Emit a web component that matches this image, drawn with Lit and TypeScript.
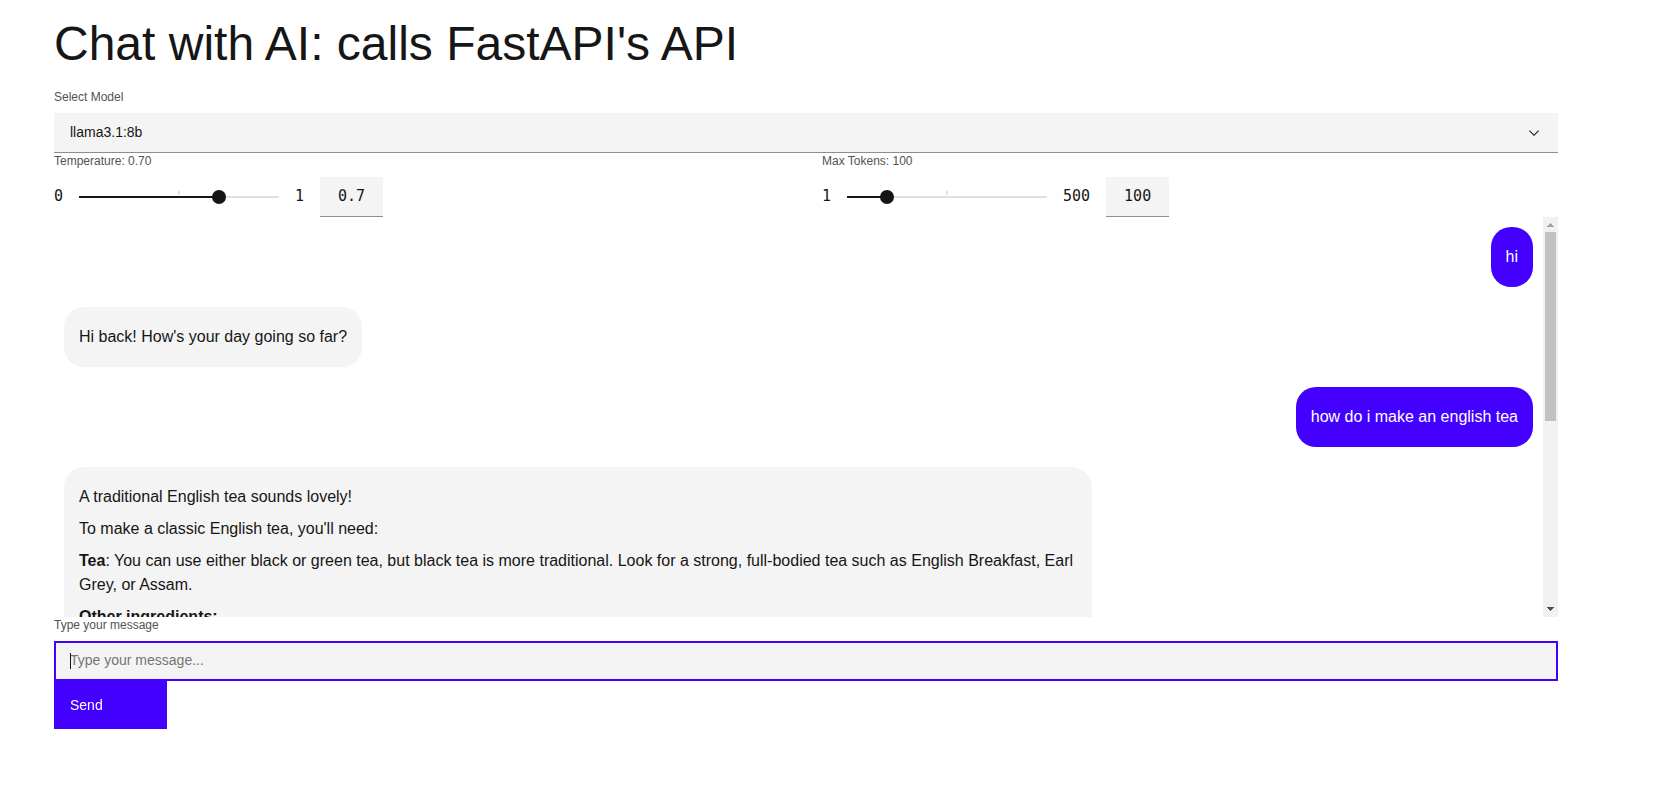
import { LitElement, html, css } from "lit";
import { customElement, property, state, query } from "lit/decorators.js";
import { classMap } from "lit/directives/class-map.js";
import { styleMap } from "lit/directives/style-map.js";

interface Message {
  role: "user" | "assistant";
  paragraphs: { lead?: string; text: string }[];
}

const initialMessages: Message[] = [
  { role: "user", paragraphs: [{ text: "hi" }] },
  { role: "assistant", paragraphs: [{ text: "Hi back! How's your day going so far?" }] },
  { role: "user", paragraphs: [{ text: "how do i make an english tea" }] },
  {
    role: "assistant",
    paragraphs: [
      { text: "A traditional English tea sounds lovely!" },
      { text: "To make a classic English tea, you'll need:" },
      {
        lead: "Tea",
        text: ": You can use either black or green tea, but black tea is more traditional. Look for a strong, full-bodied tea such as English Breakfast, Earl Grey, or Assam.",
      },
      { lead: "Other ingredients:", text: "" },
      { text: "Fresh cold water" },
      { text: "Milk" },
      { text: "Sugar or honey" },
      { lead: "Instructions:", text: "" },
      { text: "Boil the water in a kettle." },
      { text: "Warm the teapot with a little hot water." },
      { text: "Add one teaspoon of tea for each cup." },
      {
        text: "Pour the boiling water over the leaves and let the tea steep for 3 to 5 minutes, depending on how strong you like it. Leaving it for longer than that can make the tea taste bitter.",
      },
      { text: "Strain into a cup and add milk to taste." },
      { text: "Enjoy!" },
    ],
  },
];

@customElement("value-slider")
export class ValueSlider extends LitElement {
  @property() label = "";
  @property({ type: Number }) min = 0;
  @property({ type: Number }) max = 1;
  @property({ type: Number }) step = 1;
  @property({ type: Number }) value = 0;
  @property({ type: Number }) digits = 0;

  static styles = css`
    :host {
      display: block;
    }
    .label {
      display: block;
      margin-bottom: 8px;
      font-size: 12px;
      line-height: 16px;
      color: #525252;
    }
    .row {
      display: flex;
      align-items: center;
      gap: 16px;
      font: 15px/18px "DejaVu Sans Mono", monospace;
      color: #161616;
    }
    .bound {
      padding-bottom: 2px;
    }
    .range {
      appearance: none;
      width: 214px;
      height: 14px;
      margin: 0 -7px;
      background:
        linear-gradient(#e0e0e0, #e0e0e0) 50% 1px / 2px 4px no-repeat,
        linear-gradient(to right, #161616 var(--fill), #e0e0e0 var(--fill)) 50% 50% / calc(100% - 14px) 2px no-repeat;
      outline: none;
    }
    .range::-webkit-slider-thumb {
      appearance: none;
      width: 14px;
      height: 14px;
      border-radius: 50%;
      background: #161616;
    }
    .number {
      box-sizing: border-box;
      width: 63px;
      height: 40px;
      padding: 0 0 2px;
      border: 0;
      border-bottom: 1px solid #8d8d8d;
      border-radius: 0;
      background: #f4f4f4;
      color: #161616;
      font: inherit;
      text-align: center;
      appearance: textfield;
      outline: none;
    }
    .number::-webkit-inner-spin-button {
      appearance: none;
      margin: 0;
    }
  `;

  private onInput(e: Event) {
    this.value = Number((e.target as HTMLInputElement).value);
  }

  render() {
    const fill = ((this.value - this.min) / (this.max - this.min)) * 100;
    return html`
      <label class="label" for="range">${this.label}: ${this.value.toFixed(this.digits)}</label>
      <div class="row">
        <span class="bound">${this.min}</span>
        <input id="range" class="range" type="range" min=${this.min} max=${this.max} step=${this.step}
          .value=${String(this.value)} style=${styleMap({ "--fill": `${fill}%` })} @input=${this.onInput} />
        <span class="bound">${this.max}</span>
        <input class="number" type="number" aria-label=${this.label} min=${this.min} max=${this.max}
          step=${this.step} .value=${String(this.value)} @change=${this.onInput} />
      </div>
    `;
  }
}

@customElement("app-root")
export class AppRoot extends LitElement {
  @state() private messages = initialMessages;
  @state() private draft = "";
  @state() private thumbSize = 0;
  @state() private thumbStart = 0;
  @query(".text-input") private input!: HTMLInputElement;
  @query(".thread") private thread!: HTMLElement;

  static styles = css`
    :host {
      display: block;
      padding: 16px 106px 16px 54px;
      background: #ffffff;
      color: #161616;
      font: 16px/24px "Liberation Sans", Arial, sans-serif;
    }
    .title {
      margin: 0 0 17px;
      font-size: 48px;
      line-height: 56px;
      font-weight: 400;
    }
    .label {
      display: block;
      margin-bottom: 8px;
      font-size: 12px;
      line-height: 16px;
      color: #525252;
    }
    .field {
      display: grid;
      align-items: center;
    }
    .select,
    .chevron,
    .text-input,
    .caret {
      grid-area: 1 / 1;
    }
    .select,
    .text-input {
      appearance: none;
      box-sizing: border-box;
      width: 100%;
      height: 40px;
      padding: 0 16px 2px;
      border: 0;
      border-bottom: 1px solid #8d8d8d;
      border-radius: 0;
      background: #f4f4f4;
      color: #161616;
      font: 14px/18px "Liberation Sans", Arial, sans-serif;
      outline: none;
    }
    .chevron {
      justify-self: end;
      width: 16px;
      height: 16px;
      margin-right: 16px;
      fill: #161616;
      pointer-events: none;
    }
    .settings {
      display: grid;
      grid-template-columns: 1fr 1fr;
      column-gap: 32px;
    }
    .viewport {
      display: flex;
      height: 400px;
    }
    .thread {
      flex: 1;
      min-width: 0;
      overflow-y: scroll;
      scrollbar-width: none;
    }
    .scrollbar {
      display: flex;
      flex-direction: column;
      width: 15px;
      background: #f1f1f1;
    }
    .arrow {
      width: 15px;
      height: 15px;
      fill: #505050;
    }
    .arrow.disabled {
      fill: #a3a3a3;
    }
    .track {
      flex: 1;
      padding: 0 2px;
    }
    .thumb {
      background: #c1c1c1;
    }
    .message {
      display: flex;
      padding: 10px;
    }
    .message.user {
      justify-content: flex-end;
    }
    .bubble {
      display: flow-root;
      box-sizing: border-box;
      max-width: 70%;
      padding: 10px 15px;
      border-radius: 20px;
      background: #f4f4f4;
    }
    .user .bubble {
      background: #4400ff;
      color: #ffffff;
    }
    .paragraph {
      margin: 8px 0;
    }
    .text-input {
      outline: 2px solid transparent;
      outline-offset: -2px;
      caret-color: #161616;
    }
    .text-input.empty {
      caret-color: transparent;
    }
    .text-input:focus {
      outline-color: #4400ff;
    }
    .text-input::placeholder {
      color: #757575;
    }
    .caret {
      visibility: hidden;
      width: 1px;
      height: 16px;
      margin-left: 16px;
      background: #161616;
      pointer-events: none;
    }
    .text-input.empty:focus + .caret {
      visibility: visible;
    }
    .send {
      display: block;
      min-height: 48px;
      padding: 0 64px 0 16px;
      border: 0;
      background: #4400ff;
      color: #ffffff;
      font: 14px/18px "Liberation Sans", Arial, sans-serif;
      text-align: left;
      cursor: pointer;
    }
  `;

  firstUpdated() {
    this.input.focus({ preventScroll: true });
  }

  updated() {
    this.measure();
  }

  private measure() {
    const { clientHeight, scrollHeight, scrollTop } = this.thread;
    this.thumbSize = (clientHeight / scrollHeight) * 100;
    this.thumbStart = (scrollTop / scrollHeight) * (clientHeight - 30);
  }

  private send(e: Event) {
    e.preventDefault();
    const text = this.draft.trim();
    if (!text) return;
    this.messages = [...this.messages, { role: "user", paragraphs: [{ text }] }];
    this.draft = "";
  }

  render() {
    return html`
      <h1 class="title">Chat with AI: calls FastAPI's API</h1>
      <label class="label" for="model">Select Model</label>
      <div class="field">
        <select id="model" class="select">
          <option>llama3.1:8b</option>
        </select>
        <svg class="chevron" viewBox="0 0 16 16" aria-hidden="true">
          <path d="M8 11L3 6 3.7 5.3 8 9.6 12.3 5.3 13 6z"></path>
        </svg>
      </div>
      <div class="settings">
        <value-slider label="Temperature" min="0" max="1" step="0.1" value="0.7" digits="2"></value-slider>
        <value-slider label="Max Tokens" min="1" max="500" step="1" value="100"></value-slider>
      </div>
      <div class="viewport">
        <div class="thread" @scroll=${this.measure}>
          ${this.messages.map(
            (m) => html`
              <div class=${classMap({ message: true, user: m.role === "user" })}>
                <div class="bubble">
                  ${m.paragraphs.map(
                    (p) => html`<p class="paragraph">${p.lead ? html`<strong>${p.lead}</strong>` : ""}${p.text}</p>`
                  )}
                </div>
              </div>
            `
          )}
        </div>
        <div class="scrollbar" aria-hidden="true">
          <svg class=${classMap({ arrow: true, disabled: this.thumbStart === 0 })} viewBox="0 0 15 15">
            <path d="M7 6h1v1h1v1h1v1h1v1H4V9h1V8h1V7h1z"></path>
          </svg>
          <div class="track">
            <div class="thumb" style=${styleMap({
              height: `${this.thumbSize}%`,
              transform: `translateY(${this.thumbStart}px)`,
            })}></div>
          </div>
          <svg class="arrow" viewBox="0 0 15 15">
            <path d="M4 5h7v1h-1v1H9v1H8v1H7V8H6V7H5V6H4z"></path>
          </svg>
        </div>
      </div>
      <form @submit=${this.send}>
        <label class="label" for="message">Type your message</label>
        <div class="field">
          <input id="message" class=${classMap({ "text-input": true, empty: !this.draft })} type="text"
            placeholder="Type your message..." autocomplete="off" .value=${this.draft}
            @input=${(e: Event) => (this.draft = (e.target as HTMLInputElement).value)} />
          <span class="caret"></span>
        </div>
        <button class="send" type="submit">Send</button>
      </form>
    `;
  }
}
